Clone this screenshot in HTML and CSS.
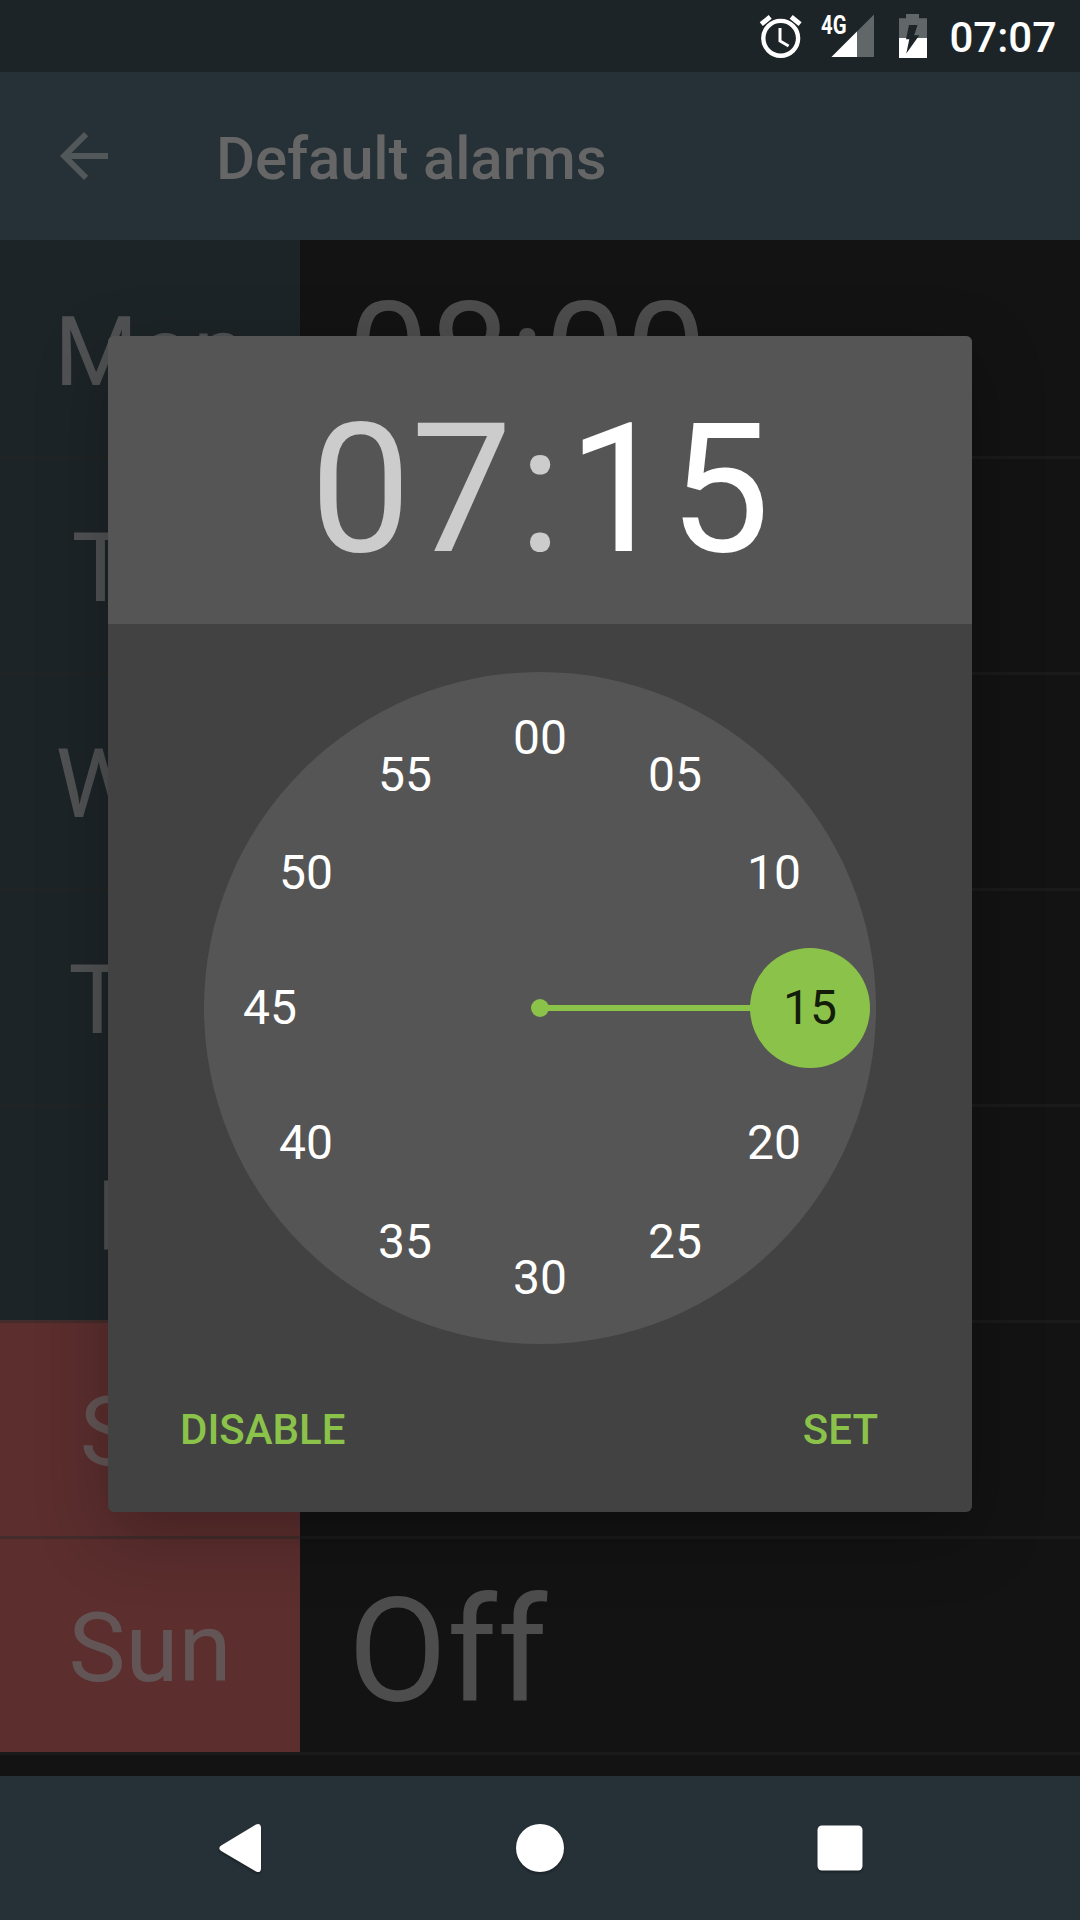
FILE: index.html
```html
<!DOCTYPE html>
<html lang="en">
<head>
<meta charset="utf-8">
<title>Default alarms</title>
<link rel="stylesheet" href="styles.css">
</head>
<body>
<div class="screen">
  <div class="status-bar">
    <svg class="status-icons" width="200" height="72" viewBox="740 0 200 72">
      <g fill="none" stroke="#fff">
        <circle cx="780.7" cy="38.3" r="17.4" stroke-width="4.4"/>
        <path d="M780 28v13l8.600 5" stroke-width="3"/>
        <path d="M761.300 24.200l8.900-7.400M800.100 24.200l-8.900-7.400" stroke-width="4.8"/>
      </g>
      <path d="M874 14.500V57H831.500z" fill="#616668"/>
      <path d="M857 31.500V57H831.500z" fill="#fff"/>
      <text class="network" x="821" y="33.500" textLength="25.500" lengthAdjust="spacingAndGlyphs">4G</text>
      <path d="M899 18.300h7V14h13v4.300h8V38h-28z" fill="#616668"/>
      <path d="M899 38h28v20h-28z" fill="#fff"/>
      <path d="M909 25h8.500L914.200 35.300H919.300L906.300 53.500L909.300 39.200H906z" fill="#1d2427"/>
    </svg>
    <span class="status-time">07:07</span>
  </div>

  <header class="toolbar">
    <svg class="back" width="72" height="72" viewBox="0 0 24 24"><path d="M20 11H7.830l5.590-5.590L12 4l-8 8 8 8 1.410-1.410L7.830 13H20v-2z"/></svg>
    <h1 class="title">Default alarms</h1>
  </header>

  <main class="days">
    <div class="row"><div class="day">Mon</div><div class="time">08:00</div></div>
    <div class="row"><div class="day">Tue</div><div class="time"></div></div>
    <div class="row"><div class="day">Wed</div><div class="time"></div></div>
    <div class="row"><div class="day">Thu</div><div class="time"></div></div>
    <div class="row"><div class="day">Fri</div><div class="time"></div></div>
    <div class="row"><div class="day weekend">Sat</div><div class="time"></div></div>
    <div class="row"><div class="day weekend">Sun</div><div class="time">Off</div></div>
    <div class="row end"></div>
  </main>

  <nav class="nav-bar">
    <svg width="1080" height="144" viewBox="0 0 1080 144">
      <path d="M222 69L256 48.500Q260.500 46.500 261 51.500V93Q260.500 97.500 256 95.500L222 75.500Q216.500 72 222 69z"/>
      <circle cx="540" cy="72" r="24"/>
      <rect x="817.500" y="49.500" width="45" height="45" rx="4.500"/>
    </svg>
  </nav>

  <section class="dialog">
    <div class="dialog-head"><span class="hour">07</span><span class="colon">:</span><span class="minute">15</span></div>
    <div class="dial-wrap">
      <svg class="dial" width="672" height="672" viewBox="-336 -336 672 672">
        <circle class="face" r="336"/>
        <g class="hand">
          <path d="M0-3h216v6H0z"/>
          <circle r="9"/>
          <circle cx="270" r="60"/>
        </g>
        <g class="numbers">
          <text x="0" y="-254">00</text>
          <text x="135" y="-217">05</text>
          <text x="234" y="-119">10</text>
          <text class="selected" x="270" y="16">15</text>
          <text x="234" y="151">20</text>
          <text x="135" y="250">25</text>
          <text x="0" y="286">30</text>
          <text x="-135" y="250">35</text>
          <text x="-234" y="151">40</text>
          <text x="-270" y="16">45</text>
          <text x="-234" y="-119">50</text>
          <text x="-135" y="-217">55</text>
        </g>
      </svg>
    </div>
    <div class="actions"><span>DISABLE</span><span>SET</span></div>
  </section>
</div>
</body>
</html>
```
FILE: styles.css
```css
* { box-sizing: border-box; }
body { margin: 0; background: #131313; font-family: Roboto, sans-serif; }

.screen {
  position: relative;
  width: 1080px;
  height: 1920px;
  display: flex;
  flex-direction: column;
  overflow: hidden;
}

.status-bar {
  flex: none;
  height: 72px;
  padding-right: 24px;
  display: flex;
  justify-content: flex-end;
  align-items: center;
  background: #1d2427;
  color: #fff;
}
.status-icons { margin-right: 9px; }
.network { font-size: 25px; font-weight: 700; fill: #fff; }
.status-time { font-size: 42px; font-weight: 500; line-height: 72px; padding-top: 4px; }

.toolbar {
  flex: none;
  height: 168px;
  padding-left: 48px;
  display: flex;
  align-items: center;
  gap: 96px;
  background: #263137;
}
.back { fill: #525759; }
.title { margin: 6px 0 0; font-size: 60px; font-weight: 500; line-height: 70px; letter-spacing: -.17px; color: #666; }

.days { flex: 1; display: flex; flex-direction: column; }
.row {
  flex: none;
  height: 216px;
  display: flex;
  background: #131313;
  color: rgba(102, 102, 102, .7);
}
.row + .row { box-shadow: inset 0 3px rgba(34, 34, 34, .5); }
.row.end { height: 24px; }
.day {
  width: 300px;
  padding-top: 8px;
  background: #1d2427;
  font-size: 96px;
  line-height: 208px;
  text-align: center;
}
.row + .row .day { border-top: 3px solid #202424; padding-top: 5px; }
.day.weekend { background: #5c2e2e; }
.row + .row .day.weekend { border-top-color: #432c2b; }
.time { padding: 15px 0 0 48px; font-size: 144px; line-height: 202px; }

.nav-bar { flex: none; height: 144px; background: #263137; }
.nav-bar svg { display: block; fill: #fff; filter: drop-shadow(0 2px 1px rgba(0, 0, 0, .3)); }

.dialog {
  position: absolute;
  left: 108px;
  top: 336px;
  width: 864px;
  height: 1176px;
  border-radius: 6px;
  background: #424242;
  box-shadow: 0 22px 70px rgba(0, 0, 0, .27);
  display: flex;
  flex-direction: column;
  overflow: hidden;
}
.dialog-head {
  height: 288px;
  padding-top: 10px;
  background: #555;
  font-size: 180px;
  line-height: 288px;
  text-align: center;
  white-space: nowrap;
}
.hour, .colon { color: #ccc; }
.colon { margin: 0 6px; }
.minute { color: #fff; }
.dial-wrap { padding-top: 48px; display: flex; justify-content: center; }
.dial { display: block; }
.face { fill: #555; }
.hand { fill: #8bc34a; }
.numbers { font-size: 48px; fill: #fff; text-anchor: middle; }
.numbers .selected { fill: #141c0a; }
.actions {
  flex: 1;
  padding: 1px 94px 0 72px;
  display: flex;
  justify-content: space-between;
  font-size: 42px;
  font-weight: 500;
  line-height: 170px;
  color: #8bc34a;
}
```
